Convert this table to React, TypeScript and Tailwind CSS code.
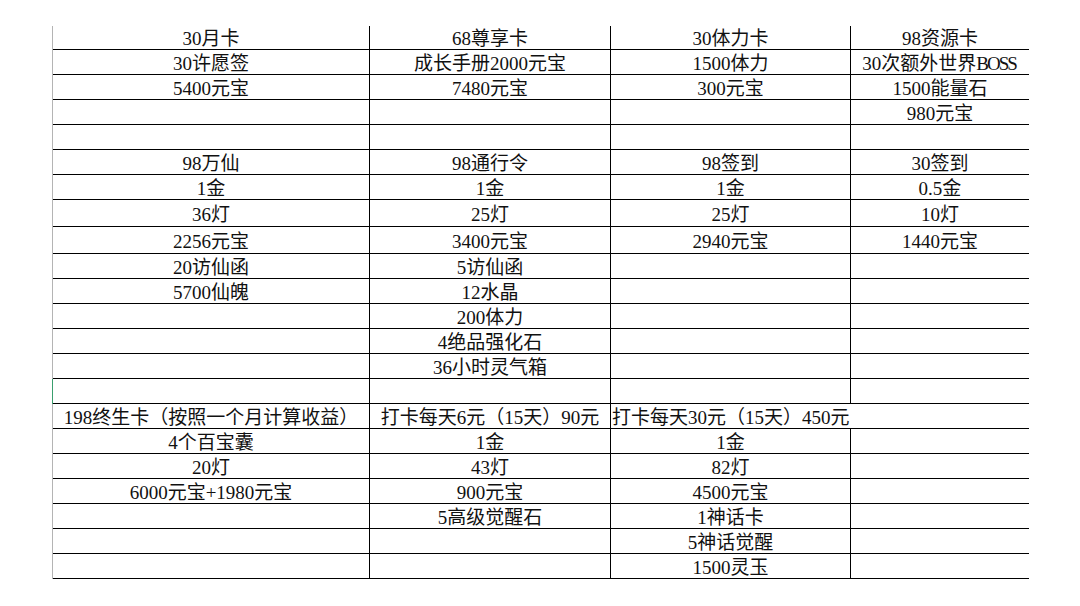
import React from "react";

type Row = { h: number; cells: React.ReactNode[]; green?: boolean; span34?: boolean };

const rows: Row[] = [
  { h: 24, cells: ["30月卡", "68尊享卡", "30体力卡", "98资源卡"] },
  {
    h: 25,
    cells: [
      "30许愿签",
      "成长手册2000元宝",
      "1500体力",
      <>
        30次额外世界<span className="tracking-[-2px] pr-[2px]">BOSS</span>
      </>,
    ],
  },
  { h: 25, cells: ["5400元宝", "7480元宝", "300元宝", "1500能量石"] },
  { h: 25, cells: ["", "", "", "980元宝"] },
  { h: 25, cells: ["", "", "", ""] },
  { h: 25, cells: ["98万仙", "98通行令", "98签到", "30签到"] },
  { h: 25, cells: ["1金", "1金", "1金", "0.5金"] },
  { h: 27, cells: ["36灯", "25灯", "25灯", "10灯"] },
  { h: 27, cells: ["2256元宝", "3400元宝", "2940元宝", "1440元宝"] },
  { h: 25, cells: ["20访仙函", "5访仙函", "", ""] },
  { h: 25, cells: ["5700仙魄", "12水晶", "", ""] },
  { h: 25, cells: ["", "200体力", "", ""] },
  { h: 25, cells: ["", "4绝品强化石", "", ""] },
  { h: 25, cells: ["", "36小时灵气箱", "", ""] },
  { h: 25, cells: ["", "", "", ""], green: true },
  {
    h: 25,
    cells: ["198终生卡（按照一个月计算收益）", "打卡每天6元（15天）90元", "打卡每天30元（15天）450元", ""],
    span34: true,
  },
  { h: 25, cells: ["4个百宝囊", "1金", "1金", ""] },
  { h: 25, cells: ["20灯", "43灯", "82灯", ""] },
  { h: 25, cells: ["6000元宝+1980元宝", "900元宝", "4500元宝", ""] },
  { h: 25, cells: ["", "5高级觉醒石", "1神话卡", ""] },
  { h: 25, cells: ["", "", "5神话觉醒", ""] },
  { h: 25, cells: ["", "", "1500灵玉", ""] },
];

const hClass: Record<number, string> = {
  24: "h-[24px]",
  25: "h-[25px]",
  27: "h-[27px]",
};

const cell = "flex items-center pt-[2px] border-b border-black whitespace-nowrap leading-none";

export default function App() {
  return (
    <div className="w-[1080px] h-[606px] bg-white overflow-hidden pt-[26px] font-['Liberation_Serif','Noto_Sans_CJK_SC',serif] text-[19px] text-[#111]">
      <div className="ml-[52px] w-[977px]">
        {rows.map((r, i) => (
          <div
            key={i}
            className={`grid grid-cols-[317px_241px_240px_178px] border-l ${
              r.green ? "border-l-[#3a9f6e]" : "border-l-[#b4b4b4]"
            } ${hClass[r.h]}`}
          >
            <div className={`${cell} justify-center border-r`}>{r.cells[0]}</div>
            <div className={`${cell} justify-center border-r`}>{r.cells[1]}</div>
            {r.span34 ? (
              <div className={`${cell} col-span-2 justify-start pl-[1px]`}>{r.cells[2]}</div>
            ) : (
              <>
                <div className={`${cell} justify-center border-r`}>{r.cells[2]}</div>
                <div className={`${cell} justify-center`}>{r.cells[3]}</div>
              </>
            )}
          </div>
        ))}
      </div>
    </div>
  );
}
